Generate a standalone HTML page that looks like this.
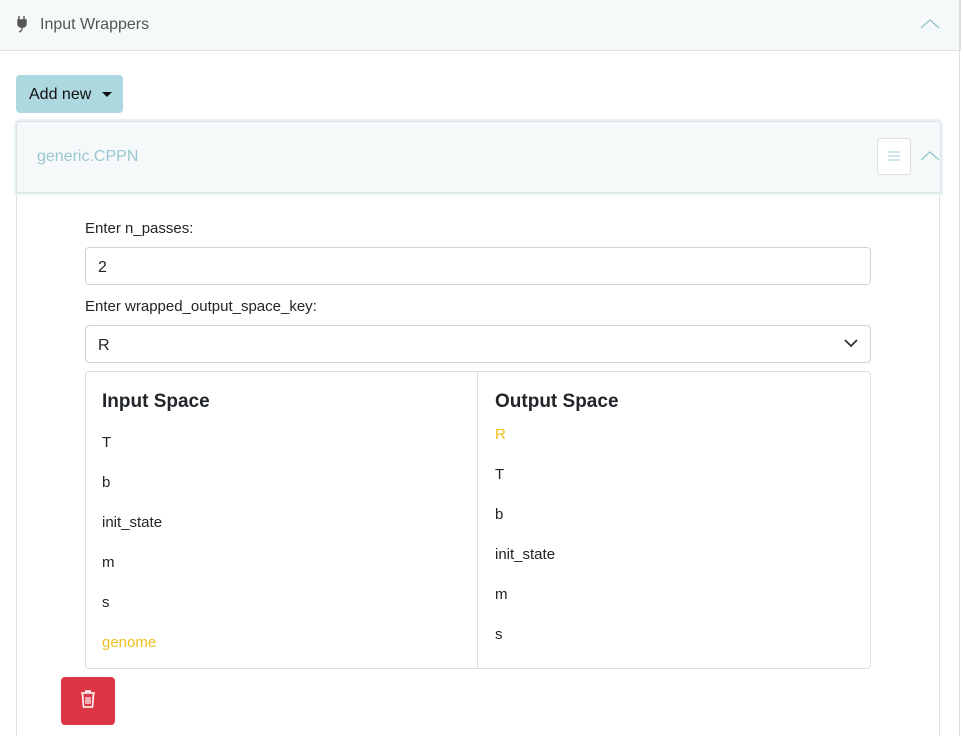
<!DOCTYPE html>
<html><head><style>
*{box-sizing:border-box;margin:0;padding:0}
html,body{width:963px;height:736px;overflow:hidden}
body{background:#fff;font-family:"Liberation Sans","DejaVu Sans",sans-serif;font-size:16px;color:#212529;position:relative}
.abs{position:absolute}
.hdr{left:0;top:0;width:961px;height:51px;background:#f5f9fa;border-bottom:1px solid #dcdfe0;border-right:1px solid #dcdfe0}
.outerR{left:959px;top:0;width:1px;height:736px;background:#dcdfe0}
.addbtn{left:16px;top:75px;width:107px;height:38px;background:#add8df;border-radius:4px;color:#111;font-size:16px;line-height:40px;padding-left:13px}
.card{left:16px;top:121px;width:924px;height:615px;border:1px solid #dde3e5;border-bottom:none;border-radius:4px 4px 0 0}
.chdr{left:16px;top:121px;width:925px;height:72px;background:#f5f9fa;border:1px solid #dde3e5;box-shadow:0 0 0 2px #e8f2f4;border-radius:4px 4px 0 0}
.input{left:85px;width:786px;height:38px;border:1px solid #ced4da;border-radius:4px;padding-left:12px;line-height:39px}
.tbl{left:85px;top:371px;width:786px;height:298px;border:1px solid #dcdfe0;border-radius:4px}
.col{position:absolute;top:0;height:100%}
.col h3{font-size:19px;font-weight:bold;margin-top:19px}
.it{height:40px;line-height:43px;font-size:15px}
.y{color:#f0bf1a}
</style></head><body>
<div class="abs hdr"></div>
<div class="abs outerR"></div>
<svg class="abs" style="left:16px;top:14px" width="12" height="20" viewBox="0 0 12 20"><path d="M3 2v4M8 2v4M2 6h8v4a3 3 0 0 1-3 3h-2a3 3 0 0 1-3-3z" fill="#555" stroke="#555" stroke-width="1.4"/><path d="M6 13v2q0 2-3 3" fill="none" stroke="#555" stroke-width="1.3"/></svg>
<div class="abs" style="left:40px;top:16px;color:#555;font-size:16px">Input Wrappers</div>
<svg class="abs" style="left:920px;top:18px" width="20" height="12"><path d="M1 10l9-8 9 8" fill="none" stroke="#9cc9d1" stroke-width="1.5"/></svg>
<div class="abs addbtn">Add new <span style="display:inline-block;width:0;height:0;border-left:5px solid transparent;border-right:5px solid transparent;border-top:5px solid #111;vertical-align:middle;margin-left:6px"></span></div>
<div class="abs card"></div>
<div class="abs chdr"></div>
<div class="abs" style="left:37px;top:148px;color:#9ac7d0;font-size:16px">generic.CPPN</div>
<div class="abs" style="left:877px;top:138px;width:34px;height:37px;border:1px solid #dcdfe0;border-radius:4px;background:#fff"></div>
<svg class="abs" style="left:887px;top:150px" width="14" height="12"><path d="M1 2h12M1 6h12M1 10h12" stroke="#9cc9d1" stroke-width="1"/></svg>
<svg class="abs" style="left:920px;top:150px" width="20" height="12"><path d="M1 10l9-8 9 8" fill="none" stroke="#9cc9d1" stroke-width="1.5"/></svg>
<div class="abs" style="left:85px;top:220px;font-size:15px">Enter n_passes:</div>
<div class="abs input" style="top:247px">2</div>
<div class="abs" style="left:85px;top:298px;font-size:15px">Enter wrapped_output_space_key:</div>
<div class="abs input" style="top:325px">R</div>
<svg class="abs" style="left:844px;top:339px" width="14" height="9"><path d="M1 1l6 6 6-6" fill="none" stroke="#333" stroke-width="1.8"/></svg>
<div class="abs tbl">
<div class="col" style="left:16px;width:370px">
<h3>Input Space</h3>
<div style="margin-top:8px"><div class="it">T</div><div class="it">b</div><div class="it">init_state</div><div class="it">m</div><div class="it">s</div><div class="it y">genome</div></div>
</div>
<div class="col" style="left:391px;width:1px;background:#dcdfe0"></div>
<div class="col" style="left:409px;width:370px">
<h3>Output Space</h3>
<div style="margin-top:0px"><div class="it y">R</div><div class="it">T</div><div class="it">b</div><div class="it">init_state</div><div class="it">m</div><div class="it">s</div></div>
</div>
</div>
<div class="abs" style="left:61px;top:677px;width:54px;height:48px;background:#dc3545;border-radius:4px"></div>
<svg class="abs" style="left:79px;top:689px" width="18" height="20" viewBox="0 0 18 20"><path d="M2 4h14M7 4V2h4v2" fill="none" stroke="#fff" stroke-width="1.6"/><path d="M3.5 5l1 13h9l1-13" fill="none" stroke="#fff" stroke-width="1.6"/><path d="M7 8v7M9 8v7M11 8v7" stroke="#fff" stroke-width="1.2"/></svg>
</body></html>
